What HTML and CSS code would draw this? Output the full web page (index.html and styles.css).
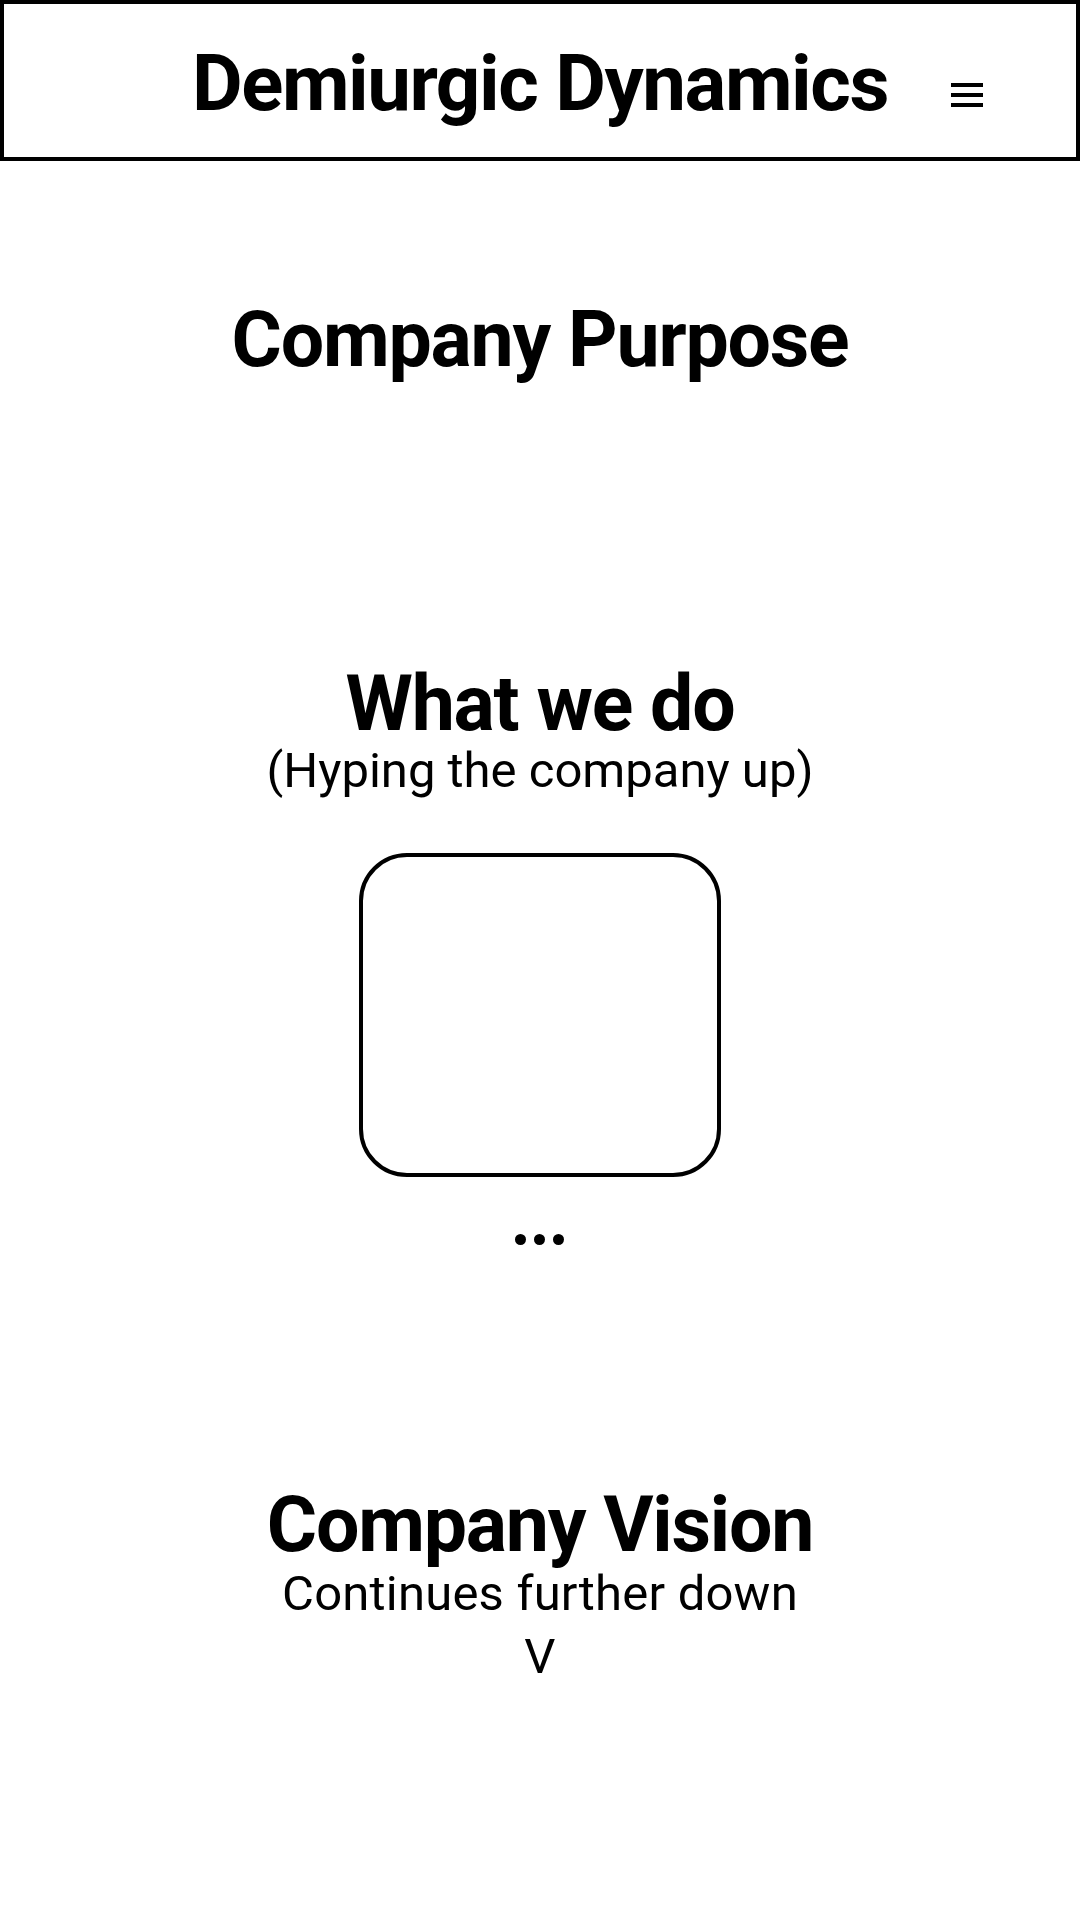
FILE: index.html
```html
<!DOCTYPE html>
<html lang="en">
<head>
<meta charset="utf-8">
<title>Demiurgic Dynamics</title>
<link rel="stylesheet" href="styles.css">
</head>
<body>
<header class="site-header">
  <div class="header-spacer"></div>
  <h1 class="brand">Demiurgic Dynamics</h1>
  <div class="menu-cell">
    <button class="menu-btn" aria-label="Menu">
      <span class="bar"></span>
      <span class="bar"></span>
      <span class="bar"></span>
    </button>
  </div>
</header>
<main class="content">
  <section class="purpose">
    <h2 class="heading">Company Purpose</h2>
  </section>
  <section class="what">
    <h2 class="heading">What we do</h2>
    <p class="sub">(Hyping the company up)</p>
    <div class="card"></div>
    <div class="dots"><span></span><span></span><span></span></div>
  </section>
  <section class="vision">
    <h2 class="heading">Company Vision</h2>
    <p class="sub">Continues further down</p>
    <p class="sub arrow">V</p>
  </section>
</main>
</body>
</html>
```
FILE: styles.css
```css
* { box-sizing: border-box; }
html, body {
  margin: 0;
  padding: 0;
  background: #fff;
  color: #000;
  font-family: Roboto, "Noto Sans", "Liberation Sans", sans-serif;
}
.site-header {
  height: 161px;
  border: 4px solid #000;
  display: grid;
  grid-template-columns: 1fr auto 1fr;
  align-items: center;
  padding-top: 6px;
}
.brand {
  margin: 0;
  font-size: 78px;
  line-height: 78px;
  font-weight: 700;
  letter-spacing: -1.45px;
  white-space: nowrap;
}
.menu-cell {
  display: flex;
  padding-left: 63px;
  padding-top: 22px;
}
.menu-btn {
  border: 0;
  background: none;
  padding: 0;
  display: flex;
  flex-direction: column;
  gap: 6px;
  width: 32px;
}
.bar {
  display: block;
  width: 32px;
  height: 4px;
  background: #000;
}
.content {
  display: flex;
  flex-direction: column;
  align-items: center;
  text-align: center;
}
.heading {
  margin: 0;
  font-size: 77px;
  line-height: 77px;
  font-weight: 700;
  letter-spacing: -1.2px;
}
.sub {
  margin: 0;
  font-size: 49px;
  line-height: 49px;
  font-weight: 400;
}
.purpose { margin-top: 141px; }
.what {
  margin-top: 287px;
  display: flex;
  flex-direction: column;
  align-items: center;
}
.what .sub { margin-top: 3px; }
.card {
  margin-top: 58px;
  width: 362px;
  height: 324px;
  border: 4px solid #000;
  border-radius: 48px;
}
.dots {
  margin-top: 57px;
  display: flex;
  gap: 8px;
}
.dots span {
  width: 11px;
  height: 11px;
  border-radius: 50%;
  background: #000;
}
.vision {
  margin-top: 242px;
  display: flex;
  flex-direction: column;
  align-items: center;
}
.vision .sub { margin-top: 5px; letter-spacing: 0.2px; }
.vision .arrow { margin-top: 14px; }
```
